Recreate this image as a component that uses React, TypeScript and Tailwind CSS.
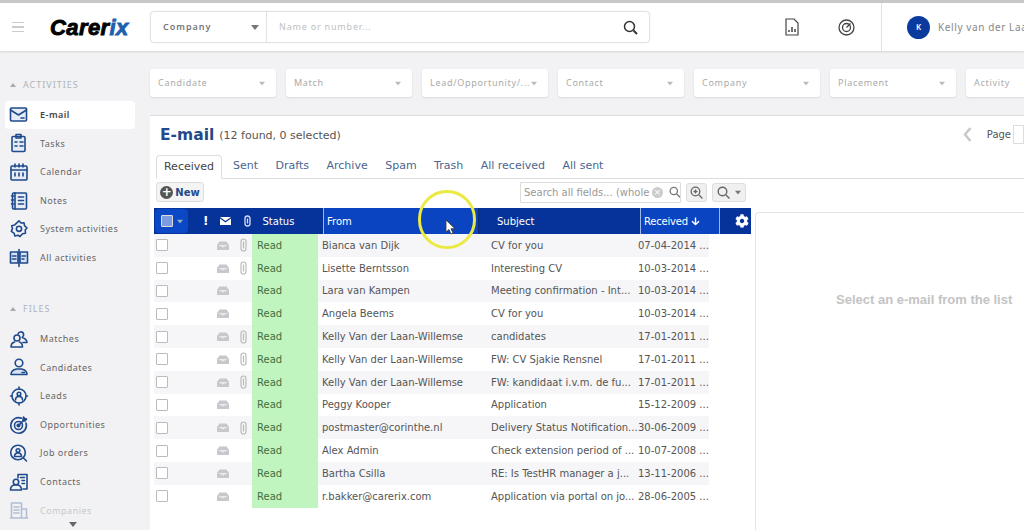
import { FaArrowDown, FaCog } from "react-icons/fa";
import type { ReactNode } from "react";

const navBlue = "#1f4a8c";

const Ico = ({ children }: { children: ReactNode }) => (
  <svg width="20" height="20" viewBox="0 0 20 20" fill="none" stroke={navBlue} strokeWidth="1.6" strokeLinejoin="round" strokeLinecap="round">
    {children}
  </svg>
);

const activities: [string, ReactNode][] = [
  ["E-mail", <Ico><rect x="1.500" y="3" width="16" height="13" rx="1" fill="#e6ecf6" /><path d="M1.500 5 9.500 10 17.500 5" /><path d="M12 13h3" /></Ico>],
  ["Tasks", <Ico><rect x="3" y="3.500" width="13" height="15" rx="1" fill="#e6ecf6" /><rect x="7" y="1.500" width="5" height="3.500" /><path d="M6 9h2M11 9h3M6 13h2M11 13h3" /></Ico>],
  ["Calendar", <Ico><rect x="2" y="4" width="16" height="14" rx="1" fill="#e6ecf6" /><path d="M2 8h16M6 2v3M10 2v3M14 2v3M6 11v3M10 11v3M14 11v3" /></Ico>],
  ["Notes", <Ico><rect x="3.500" y="2" width="14" height="16" rx="1" fill="#e6ecf6" /><path d="M6 2v16M9.500 6h5M9.500 9.500h5M9.500 13h5M2.500 5h2M2.500 9h2M2.500 13h2" /></Ico>],
  ["System activities", <Ico><path d="M10 1.800 12 4l3-.3.5 3 2.500 2.300-1.800 2 .3 3.300-3 .5L11 17.500l-2-1.200-3 .8-1-3-2.700-1.800 1.200-2.600-.8-3 3-.8Z" /><circle cx="10" cy="9.800" r="2.600" /></Ico>],
  ["All activities", <Ico><rect x="1.500" y="4" width="7.500" height="11" fill="#d8e2f2" /><rect x="11" y="4" width="7.500" height="11" fill="#d8e2f2" /><path d="M10 1.500v17M3.500 8h3.500M3.500 11h3.500M13 8h3.500M13 11h2" /></Ico>],
];

const files: [string, ReactNode][] = [
  ["Matches", <Ico><circle cx="8" cy="9" r="3" /><path d="M2 18c0-3.500 2-4.500 3.500-5M10.500 13c1.500.5 3 1.500 3 5H2" /><path d="M9 5c.5-2 4-3 5.200-1 .8 1.500 0 3.500-1 4.500 2 .7 4.500 1.500 4.800 5h-4" /></Ico>],
  ["Candidates", <Ico><circle cx="10" cy="6" r="3.800" /><path d="M2 17.500c0-4 3-5 5.500-5.500h5c2.500.5 5.500 1.500 5.500 5.500Z" fill="#d8e2f2" /><path d="M13 15.500h2.500" /></Ico>],
  ["Leads", <Ico><circle cx="10" cy="10" r="7" /><path d="M10 1v2M10 17v2M1.500 10h1.500M17 10h1.500" /><circle cx="10" cy="8" r="1.800" /><path d="M6.500 14c0-2.500 1.500-3.500 3.500-3.500s3.500 1 3.500 3.500" /></Ico>],
  ["Opportunities", <Ico><path d="M12.500 3.200A7.800 7.800 0 1 0 17 8" /><circle cx="9.500" cy="10.500" r="4" /><circle cx="9.500" cy="10.500" r="1.300" fill={navBlue} /><path d="M10 10 16 4" /><path d="m14.500 2 1 1.500 2 .5-1.500 2-2-.5Z" fill={navBlue} /></Ico>],
  ["Job orders", <Ico><circle cx="9" cy="9.500" r="7.300" /><path d="m14.500 15 3 3" /><circle cx="9" cy="7.500" r="1.800" /><path d="M5.500 13.500c0-2.500 1.500-3.500 3.500-3.500s3.500 1 3.500 3.500Z" /></Ico>],
  ["Contacts", <Ico><path d="M9 6V2.500h9v14.500h-4" /><path d="M11.500 5.500h4M13 8.500h2.500M13 11.500h2.500" /><circle cx="7" cy="10" r="2.700" /><path d="M1.500 18c0-3 1.500-4.500 3.500-5h4c2 .5 3.500 2 3.500 5Z" /></Ico>],
  ["Companies", <Ico><path d="M2.500 18V3h10v15M12.500 9h5v9M1.500 18h17M5 7h5M5 10h5M5 13h5" /></Ico>],
];

const filters = ["Candidate", "Match", "Lead/Opportunity/...", "Contact", "Company", "Placement", "Activity"];
const tabs = ["Sent", "Drafts", "Archive", "Spam", "Trash", "All received", "All sent"];

const mails = [
  { clip: true, from: "Bianca van Dijk", subject: "CV for you", date: "07-04-2014 ..." },
  { clip: true, from: "Lisette Berntsson", subject: "Interesting CV", date: "10-03-2014 ..." },
  { clip: false, from: "Lara van Kampen", subject: "Meeting confirmation - Int...", date: "10-03-2014 ..." },
  { clip: false, from: "Angela Beems", subject: "CV for you", date: "10-03-2014 ..." },
  { clip: true, from: "Kelly Van der Laan-Willemse", subject: "candidates", date: "17-01-2011 ..." },
  { clip: true, from: "Kelly Van der Laan-Willemse", subject: "FW: CV Sjakie Rensnel", date: "17-01-2011 ..." },
  { clip: true, from: "Kelly Van der Laan-Willemse", subject: "FW: kandidaat i.v.m. de fu...", date: "17-01-2011 ..." },
  { clip: false, from: "Peggy Kooper", subject: "Application", date: "15-12-2009 ..." },
  { clip: true, from: "postmaster@corinthe.nl", subject: "Delivery Status Notification...", date: "30-06-2009 ..." },
  { clip: false, from: "Alex Admin", subject: "Check extension period of ...", date: "10-07-2008 ..." },
  { clip: false, from: "Bartha Csilla", subject: "RE: Is TestHR manager a j...", date: "13-11-2006 ..." },
  { clip: false, from: "r.bakker@carerix.com", subject: "Application via portal on jo...", date: "28-06-2005 ..." },
];

const Caret = ({ className }: { className: string }) => (
  <span className={`h-0 w-0 border-x-[4px] border-t-[5px] border-x-transparent ${className}`} />
);

const NavItem = ({ label, icon, active, faded }: { label: string; icon: ReactNode; active?: boolean; faded?: boolean }) => (
  <div className={`ml-[5px] flex h-[28.6px] w-[130px] items-center rounded-sm pl-[4px] ${active ? "bg-white font-semibold text-[#444]" : "text-[#666]"} ${faded ? "opacity-30" : ""}`}>
    <span className="flex w-[31px] shrink-0">{icon}</span>
    <span className="text-[9px] tracking-[0.5px]">{label}</span>
  </div>
);

const SectionTitle = ({ label }: { label: string }) => (
  <div className="flex h-[12px] items-center gap-[7px] pl-[10px] text-[9px] tracking-[1px] text-[#b0b3b8]">
    <span className="h-0 w-0 border-x-[3px] border-b-[4px] border-x-transparent border-b-[#aaa]" />
    {label}
  </div>
);

const Sidebar = () => (
  <aside className="relative flex w-[150px] shrink-0 flex-col overflow-hidden pt-[28px] font-['Noto_Sans',sans-serif]">
    <SectionTitle label="ACTIVITIES" />
    <div className="mt-[9.500px]">
      {activities.map(([label, icon]) => (
        <NavItem key={label} label={label} icon={icon} active={label === "E-mail"} />
      ))}
    </div>
    <div className="mt-[30.500px]">
      <SectionTitle label="FILES" />
    </div>
    <div className="mt-[10px]">
      {files.map(([label, icon]) => (
        <NavItem key={label} label={label} icon={icon} faded={label === "Companies"} />
      ))}
    </div>
    <span className="absolute bottom-[3px] left-[69px] h-0 w-0 border-x-[4px] border-t-[5px] border-x-transparent border-t-[#666]" />
  </aside>
);

const Header = () => (
  <header className="flex h-[48px] shrink-0 items-center bg-white font-['Noto_Sans',sans-serif] shadow-[0_1px_2px_rgba(0,0,0,0.12)]">
    <div className="ml-[12px] flex w-[12px] shrink-0 flex-col gap-[3px]">
      <span className="h-[1.500px] bg-[#ccc]" />
      <span className="h-[1.500px] bg-[#ccc]" />
      <span className="h-[1.500px] bg-[#ccc]" />
    </div>
    <div className="ml-[26px] w-[100px] shrink-0 font-['Liberation_Sans',sans-serif] text-[22px] font-bold italic tracking-[0.4px] text-black [-webkit-text-stroke:0.9px_black]">
      Carer<span className="text-[#1f5fb0] [-webkit-text-stroke:0.9px_#1f5fb0]">ix</span>
    </div>
    <div className="flex h-[32px] w-[500px] shrink-0 items-center rounded-sm border border-[#e2e2e2] shadow-[0_0_2px_rgba(0,0,0,0.08)]">
      <div className="flex h-full w-[116px] items-center justify-between border-r border-[#e2e2e2] pl-[12px] pr-[7px] text-[9px] font-semibold tracking-[1px] text-[#777]">
        Company
        <Caret className="border-t-[#777]" />
      </div>
      <span className="flex-1 pl-[12px] text-[9px] tracking-[0.8px] text-[#c0c0c0]">Name or number...</span>
      <svg className="mr-[11px]" width="15" height="15" viewBox="0 0 15 15" fill="none" stroke="#333" strokeWidth="1.500">
        <circle cx="6.500" cy="6.500" r="5" />
        <path d="m10.500 10.500 3.500 3.500" strokeWidth="2" />
      </svg>
    </div>
    <svg className="ml-[135px] shrink-0" width="14" height="18" viewBox="0 0 14 18" fill="none" stroke="#444" strokeWidth="1.200">
      <path d="M1 1h8l4 4v12H1Z" />
      <path d="M4 14v-2M7 14V9M10 14v-3" strokeWidth="1.500" />
    </svg>
    <svg className="ml-[39px] shrink-0" width="17" height="17" viewBox="0 0 17 17" fill="none" stroke="#444" strokeWidth="1.300">
      <circle cx="8.500" cy="8.500" r="7.500" />
      <circle cx="8.500" cy="8.500" r="4" />
      <path d="m8.500 8.500 4-4" />
    </svg>
    <div className="ml-[26px] flex h-full shrink-0 items-center border-l border-[#e2e2e2] pl-[25px]">
      <span className="flex h-[23px] w-[23px] items-center justify-center rounded-full bg-[#0b3a9e] text-[8px] font-semibold text-white">K</span>
      <span className="ml-[8px] whitespace-nowrap text-[10px] tracking-[0.6px] text-[#888]">Kelly van der Laan-Willemse</span>
    </div>
  </header>
);

const FilterRow = () => (
  <div className="flex h-[64px] shrink-0 items-start gap-[10px] pt-[18px] font-['Noto_Sans',sans-serif]">
    {filters.map((f) => (
      <div key={f} className="flex h-[28px] w-[126px] shrink-0 items-center justify-between rounded-[3px] bg-white pl-[8px] pr-[10px] text-[9px] tracking-[0.7px] text-[#aaa] shadow-[0_1px_2px_rgba(0,0,0,0.1)]">
        {f}
        <Caret className="scale-75 border-t-[#bbb]" />
      </div>
    ))}
  </div>
);

const Tabs = () => (
  <div className="ml-[6px] mt-[3px] flex h-[24px] items-end border-b border-[#ddd] text-[11px] text-[#4a6690]">
    <div className="mb-[-1px] flex h-[24px] w-[66px] items-center justify-center rounded-t-sm border border-b-white border-[#ddd] bg-white text-[#444]">Received</div>
    <div className="flex h-[23px] items-center gap-[17.500px] pl-[11px]">
      {tabs.map((t) => (
        <span key={t}>{t}</span>
      ))}
    </div>
  </div>
);

const Toolbar = () => (
  <div className="ml-[6px] mt-[2px] flex h-[22px] w-[590px] items-center justify-between">
    <div className="flex h-[20px] w-[48px] items-center justify-center gap-[2px] rounded-[3px] border border-[#ddd] bg-[#f4f4f4] text-[10px] font-bold text-[#1f4a8c]">
      <span className="flex h-[13px] w-[13px] items-center justify-center rounded-full bg-[#555] text-[12px] font-bold leading-none text-white">+</span>
      New
    </div>
    <div className="flex items-center gap-[5px]">
      <div className="flex h-[21px] w-[161px] items-center rounded-[1px] border border-[#ddd] pl-[3px] text-[10px] text-[#999]">
        <span className="w-[124px] whitespace-nowrap">Search all fields... (whole</span>
        <span className="ml-[4px] flex h-[11px] w-[11px] items-center justify-center rounded-full bg-[#ccc] text-[9px] leading-none text-white">×</span>
        <svg className="ml-[6px]" width="12" height="12" viewBox="0 0 12 12" fill="none" stroke="#777" strokeWidth="1.400">
          <circle cx="5" cy="5" r="3.800" />
          <path d="m8 8 3.500 3.500" />
        </svg>
      </div>
      <div className="flex h-[19px] w-[21px] items-center justify-center rounded-[3px] border border-[#ddd] bg-[#f0f0f0]">
        <svg width="13" height="13" viewBox="0 0 13 13" fill="none" stroke="#666" strokeWidth="1.300">
          <circle cx="5.500" cy="5.500" r="4.300" />
          <path d="m9 9 3.500 3.500M3.500 5.500h4M5.500 3.500v4" />
        </svg>
      </div>
      <div className="flex h-[19px] w-[34px] items-center justify-center gap-[4px] rounded-[3px] border border-[#ddd] bg-[#f0f0f0]">
        <svg width="13" height="13" viewBox="0 0 13 13" fill="none" stroke="#666" strokeWidth="1.400">
          <circle cx="5.500" cy="5.500" r="4.300" />
          <path d="m9 9 3.500 3.500" />
        </svg>
        <Caret className="scale-75 border-t-[#777]" />
      </div>
    </div>
  </div>
);

const TableHeader = () => (
  <div className="flex h-[26px] w-[597px] text-[10px] text-white">
    <div className="flex w-[169px] items-center bg-[#06339a]">
      <div className="ml-[1px] flex h-[24px] w-[33px] items-center gap-[3px] rounded-sm bg-[#0a48c6] pl-[6px]">
        <span className="h-[12px] w-[12px] rounded-[1px] border border-[#ddd] bg-[#7c9be0]" />
        <Caret className="scale-75 border-t-[#9ab]" />
      </div>
      <span className="ml-[15px] text-[12px] font-bold">!</span>
      <svg className="ml-[12px]" width="11" height="8" viewBox="0 0 11 8">
        <path d="M0 0h11L5.500 4Z M0 1.600 5.500 5.500 11 1.600V8H0Z" fill="#fff" />
      </svg>
      <svg className="ml-[13px]" width="7" height="12" viewBox="0 0 7 12" fill="none" stroke="#dde" strokeWidth="1.300">
        <path d="M1 3.500a2.500 2.500 0 0 1 5 0v5a2.500 2.500 0 0 1-5 0Z" />
        <path d="M3.500 3.500v5" />
      </svg>
      <span className="ml-[11px]">Status</span>
    </div>
    <div className="flex w-[155px] items-center border-l border-[#9db6ea] bg-[#0a44c0] pl-[3px]">From</div>
    <div className="flex w-[162px] items-center border-l border-[#0a2c78] bg-[#06339a] pl-[18px]">Subject</div>
    <div className="flex w-[79px] items-center gap-[3px] border-l border-[#9db6ea] bg-[#0a44c0] pl-[3px] tracking-[-0.2px]">
      Received
      <FaArrowDown size={9} color="#fff" />
    </div>
    <div className="flex w-[32px] items-center border-l border-[#9db6ea] bg-[#06339a] pl-[15px]">
      <FaCog size={14} color="#fff" />
    </div>
  </div>
);

const MailRow = ({ clip, from, subject, date, striped }: { clip: boolean; from: string; subject: string; date: string; striped: boolean }) => (
  <div className={`grid h-[22.800px] w-[555px] grid-cols-[98px_66px_169px_147px_75px] items-center whitespace-nowrap text-[10px] text-[#555] ${striped ? "bg-[#f6f6f8]" : ""}`}>
    <div className="flex items-center pl-[2px]">
      <span className="h-[12px] w-[12px] rounded-[1px] border border-[#bbb] bg-white" />
      <svg className="ml-[49px]" width="12" height="9" viewBox="0 0 12 9">
        <path d="M0 4 2.500.5h7L12 4v5H0Z" fill="#c8c8cc" />
        <path d="M1 4h10L6 6.500Z" fill="#eaeaec" />
      </svg>
      {clip && (
        <svg className="ml-[11px]" width="7" height="14" viewBox="0 0 7 14" fill="none" stroke="#bbb" strokeWidth="1.200">
          <path d="M1 3.500a2.500 2.500 0 0 1 5 0v7a2.500 2.500 0 0 1-5 0Z" />
          <path d="M3.500 3.500v7" />
        </svg>
      )}
    </div>
    <div className="flex h-full items-center bg-[#c0f5c0] pl-[5px] text-[#3f6f3f]">Read</div>
    <div className="pl-[4px]">{from}</div>
    <div className="pl-[4px]">{subject}</div>
    <div className="pl-[4px]">{date}</div>
  </div>
);

const Panel = () => (
  <section className="relative min-h-0 flex-1 overflow-hidden border-t border-[#ddd] bg-white">
    <div className="flex h-[36px] items-center whitespace-nowrap pl-[10px]">
      <span className="mt-[4px] text-[15.500px] font-bold text-[#1f4a8c]">E-mail</span>
      <span className="ml-[5px] mt-[4px] text-[11px] text-[#555]">(12 found, 0 selected)</span>
      <svg className="ml-[622px] shrink-0" width="9" height="15" viewBox="0 0 9 15" fill="none" stroke="#c8c8c8" strokeWidth="2.500">
        <path d="M7.500 1 2 7.500 7.500 14" />
      </svg>
      <span className="ml-[15px] text-[10px] text-[#555]">Page</span>
      <span className="ml-[2px] h-[19px] w-[30px] border border-[#ddd]" />
    </div>
    <Tabs />
    <Toolbar />
    <div className="ml-[4px] mt-[5px] flex">
      <div className="shrink-0">
        <TableHeader />
        {mails.map((m, i) => (
          <MailRow key={i} {...m} striped={i % 2 === 0} />
        ))}
      </div>
      <div className="ml-[4px] mt-[4px] min-h-[330px] w-[300px] shrink-0 whitespace-nowrap rounded-tl-sm border-l border-t border-[#e4e4e4] pl-[80px] pt-[77px] font-['Liberation_Sans',sans-serif] text-[13px] font-bold text-[#c4c4c4]">
        Select an e-mail from the list
      </div>
    </div>
    <span className="absolute left-[268px] top-[74px] h-[59px] w-[58px] rounded-full border-[3px] border-[#eaea40]" />
    <svg className="absolute left-[296px] top-[104px]" width="10" height="15" viewBox="0 0 10 15">
      <path d="M0 0v12l3-2.500 2 4.500 2-1-2-4.300h4Z" fill="#fff" stroke="#333" strokeWidth="0.800" />
    </svg>
  </section>
);

export default function App() {
  return (
    <div className="flex h-[530px] w-[1024px] flex-col overflow-hidden border-t-[3px] border-[#c8c8c8] bg-[#f2f2f4] font-['DejaVu_Sans',sans-serif]">
      <Header />
      <div className="flex min-h-0 flex-1">
        <Sidebar />
        <main className="flex min-w-0 flex-1 flex-col">
          <FilterRow />
          <Panel />
        </main>
      </div>
    </div>
  );
}
